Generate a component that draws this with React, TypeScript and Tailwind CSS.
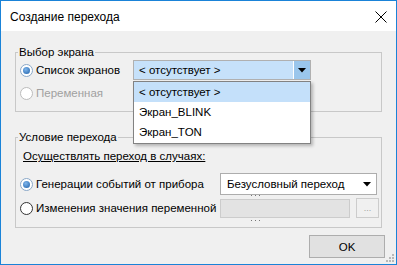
import { useState } from "react";

const font = { fontFamily: '"Liberation Sans", Arial, sans-serif' };

function Radio({ checked, disabled }: { checked?: boolean; disabled?: boolean }) {
  return (
    <span
      className={
        "flex h-[13px] w-[13px] shrink-0 items-center justify-center rounded-full border bg-white " +
        (disabled ? "border-[#bcbcbc]" : checked ? "border-[#8aa8c8]" : "border-[#333333]")
      }
    >
      {checked && (
        <span className="h-[7px] w-[7px] rounded-full bg-[radial-gradient(circle_at_40%_35%,#7fb6ec,#1d5fa8)]" />
      )}
    </span>
  );
}

function Arrow() {
  return (
    <svg width="8" height="5" viewBox="0 0 8 5">
      <path d="M0 0H8L4 4.5Z" fill="#000" />
    </svg>
  );
}

export default function App() {
  const [screen] = useState("< отсутствует >");
  const items = ["< отсутствует >", "Экран_BLINK", "Экран_TON"];

  return (
    <div
      className="flex h-[265px] w-[397px] flex-col border border-[#1a83d8] text-[11.5px] leading-[16px] text-black"
      style={font}
    >
      <div className="flex h-[30px] shrink-0 items-center justify-between bg-white pl-[9px] pr-[9px]">
        <span className="mt-[1px] text-[12px]">Создание перехода</span>
        <svg width="12" height="12" viewBox="0 0 12 12" className="mt-[2px]">
          <path d="M0.5 0.5L11.5 11.5M11.5 0.5L0.5 11.5" stroke="#000" strokeWidth="1" />
        </svg>
      </div>

      <div className="relative flex flex-1 flex-col bg-[#f0f0f0]">
        <fieldset className="mx-[14px] mt-[13px] border border-[#c8c8c8] pb-[8px]">
          <legend className="ml-[2px] px-[1px] leading-[16px]">Выбор экрана</legend>
          <div className="flex h-[20px] items-center">
            <div className="flex w-[117px] items-center gap-[3px] pl-[4px]">
              <Radio checked />
              <span>Список экранов</span>
            </div>
            <div className="relative flex h-[20px] w-[178px] border border-[#b0b0b0] bg-[#c6e1fa]">
              <div className="flex flex-1 items-center border-r border-white pl-[5px]">{screen}</div>
              <div className="flex w-[16px] items-center justify-center bg-[#9ac6ec]">
                <Arrow />
              </div>
              <div className="absolute left-[-1px] top-[20px] z-10 w-[178px] border border-[#828282] bg-white shadow-[2px_2px_3px_rgba(0,0,0,0.25)]">
                {items.map((it, i) => (
                  <div
                    key={it}
                    className={
                      "flex h-[20px] items-center pl-[5px] " + (i === 0 ? "bg-[#c4e0fa]" : "")
                    }
                  >
                    {it}
                  </div>
                ))}
                <div className="h-[1px]" />
              </div>
            </div>
          </div>
          <div className="mt-[3px] flex h-[20px] items-center gap-[3px] pl-[4px] text-[#a0a0a0]">
            <Radio disabled />
            <span>Переменная</span>
          </div>
        </fieldset>

        <fieldset className="mx-[14px] mt-[17px] border border-[#c8c8c8] pb-[9px]">
          <legend className="ml-[2px] px-[1px] leading-[16px]">Условие перехода</legend>
          <div className="mt-[3px] pl-[7px] underline">Осуществлять переход в случаях:</div>
          <div className="mt-[9px] flex h-[22px] items-center">
            <div className="flex w-[204px] items-center gap-[3px] pl-[4px]">
              <Radio checked />
              <span>Генерации событий от прибора</span>
            </div>
            <div className="flex h-[22px] w-[157px] items-center justify-between border border-[#adadad] bg-white pl-[6px] pr-[5px]">
              <span>Безусловный переход</span>
              <Arrow />
            </div>
          </div>
          <div className="mt-[3px] flex h-[20px] items-center">
            <div className="flex w-[204px] shrink-0 items-center gap-[3px] whitespace-nowrap pl-[4px]">
              <Radio />
              <span>Изменения значения переменной</span>
            </div>
            <div className="relative h-[19px] w-[130px] border border-[#cccccc] bg-[#e3e3e3]">
              <div className="absolute left-[30px] top-[-5px] flex gap-[3px]">
                <span className="h-[1px] w-[1px] bg-[#777]" />
                <span className="h-[1px] w-[1px] bg-[#777]" />
                <span className="h-[1px] w-[1px] bg-[#777]" />
              </div>
              <div className="absolute bottom-[-4px] left-[30px] flex gap-[3px]">
                <span className="h-[1px] w-[1px] bg-[#777]" />
                <span className="h-[1px] w-[1px] bg-[#777]" />
                <span className="h-[1px] w-[1px] bg-[#777]" />
              </div>
            </div>
            <div className="ml-[6px] flex h-[20px] w-[23px] items-center justify-center border border-[#cccccc] bg-[#f0f0f0] text-[9px] text-[#a0a0a0]">
              ...
            </div>
          </div>
        </fieldset>

        <div className="mr-[11px] mt-[7px] flex justify-end">
          <button className="flex h-[23px] w-[76px] items-center justify-center border border-[#adadad] bg-[#e1e1e1]">
            OK
          </button>
        </div>

        <div className="absolute bottom-[2px] right-[2px] grid grid-cols-3 gap-[1px]">
          {[0, 0, 1, 0, 1, 1, 1, 1, 1].map((v, i) => (
            <span key={i} className={"h-[2px] w-[2px] " + (v ? "bg-[#b8b8b8]" : "")} />
          ))}
        </div>
      </div>
    </div>
  );
}
